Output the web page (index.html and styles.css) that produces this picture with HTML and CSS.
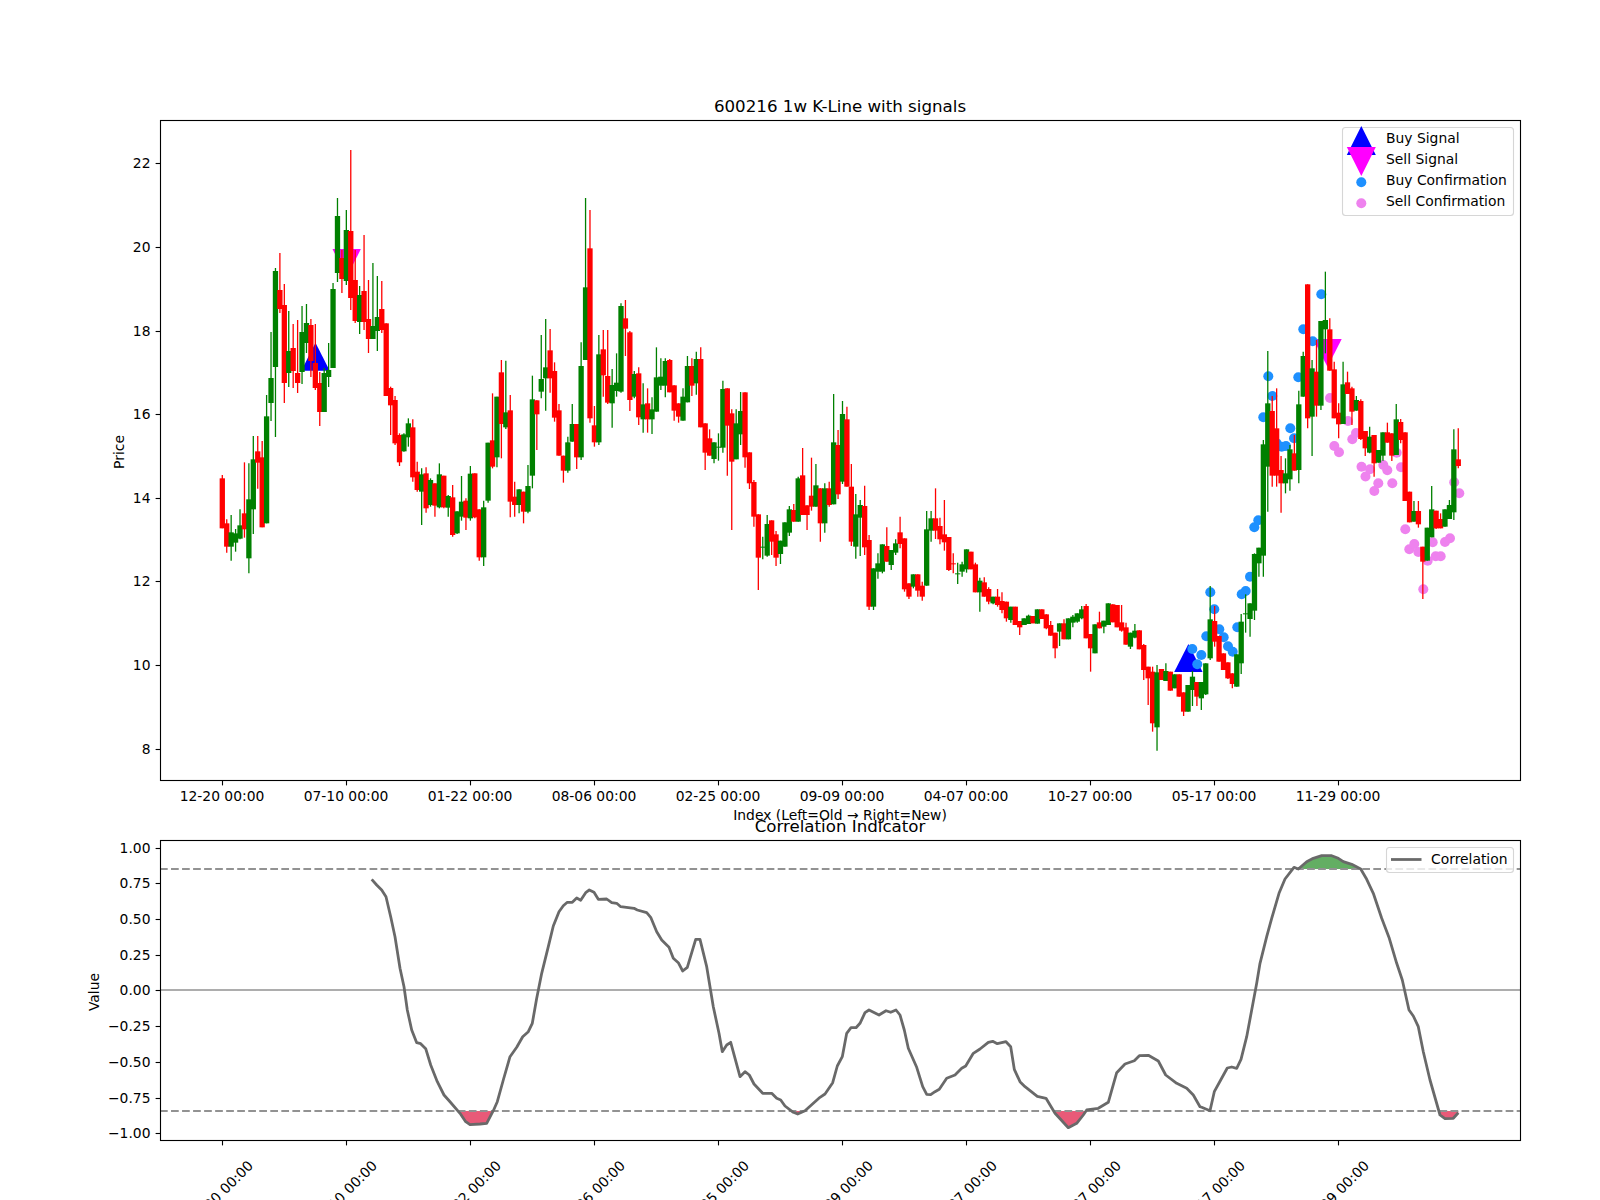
FILE: index.html
```html
<!DOCTYPE html>
<html lang="en">
<head>
<meta charset="utf-8">
<title>600216 1w K-Line with signals</title>
<link rel="stylesheet" href="styles.css">
</head>
<body>
<main class="figure">
<svg class="canvas" id="chart" xmlns="http://www.w3.org/2000/svg" width="1600" height="1200" viewBox="0 0 1600 1200">
  <defs>
    <clipPath id="below-low"><rect x="160" y="1111" width="1360" height="40"/></clipPath>
    <clipPath id="above-high"><rect x="160" y="840" width="1360" height="29"/></clipPath>
  </defs>

  <text class="title" x="840" y="112">600216 1w K-Line with signals</text>
  <g id="price-marks"></g>
  <g id="candles"></g>
  <rect class="frame" x="160.5" y="120.5" width="1360" height="660"/>
  <g id="price-ticks"></g>
  <text class="axis-label middle" x="840" y="820">Index (Left=Old → Right=New)</text>
  <text class="axis-label middle" transform="translate(124 452) rotate(-90)">Price</text>

  <g class="legend">
    <rect class="legend-box" x="1342.5" y="127.5" width="171" height="88" rx="3"/>
    <polygon class="buy" points="1361.3,126 1375.8,155 1346.8,155"/>
    <polygon class="sell" points="1346.8,147 1375.8,147 1361.3,176"/>
    <circle class="buy-dot" cx="1361.3" cy="182.3" r="5"/>
    <circle class="sell-dot" cx="1361.3" cy="203.3" r="5"/>
    <text class="axis-label" x="1386" y="143">Buy Signal</text>
    <text class="axis-label" x="1386" y="164">Sell Signal</text>
    <text class="axis-label" x="1386" y="185">Buy Confirmation</text>
    <text class="axis-label" x="1386" y="206">Sell Confirmation</text>
  </g>

  <text class="title" x="840" y="832">Correlation Indicator</text>
  <line class="zero-line" x1="160" y1="990" x2="1520" y2="990"/>
  <path class="fill-low" id="fill-low" clip-path="url(#below-low)"/>
  <path class="fill-high" id="fill-high" clip-path="url(#above-high)"/>
  <line class="level-line" x1="160" y1="869" x2="1520" y2="869"/>
  <line class="level-line" x1="160" y1="1111" x2="1520" y2="1111"/>
  <path class="corr-line" id="corr-line"/>
  <rect class="frame" x="160.5" y="840.5" width="1360" height="300"/>
  <g id="corr-ticks"></g>
  <text class="axis-label middle" transform="translate(99 992) rotate(-90)">Value</text>
  <g class="legend">
    <rect class="legend-box" x="1386.5" y="847.5" width="127" height="25" rx="3"/>
    <line class="corr-key" x1="1391" y1="859.5" x2="1421.5" y2="859.5"/>
    <text class="axis-label" x="1431" y="863.5">Correlation</text>
  </g>
</svg>
</main>
<script src="chart.js"></script>
</body>
</html>
```

FILE: styles.css
```css
html, body {
  margin: 0;
  padding: 0;
  background: #fff;
}

.figure {
  width: 1600px;
  height: 1200px;
  overflow: hidden;
}

.canvas {
  display: block;
  font-family: "DejaVu Sans", sans-serif;
}

.title {
  font-size: 16.67px;
  text-anchor: middle;
  fill: #000;
}

.axis-label,
.tick-label {
  font-size: 13.89px;
  fill: #000;
}

.middle { text-anchor: middle; }
.tick-label.center { text-anchor: middle; }
.tick-label.right { text-anchor: end; }

.frame {
  fill: none;
  stroke: #000;
  stroke-width: 1.11;
}

.tick {
  stroke: #000;
  stroke-width: 1.11;
}

.legend-box {
  fill: rgba(255, 255, 255, 0.8);
  stroke: #d6d6d6;
  stroke-width: 1.11;
}

.buy { fill: #0000ff; }
.sell { fill: #ff00ff; }
.buy-dot { fill: #1e90ff; }
.sell-dot { fill: #ee82ee; }

.wick-r { stroke: #ff0000; stroke-width: 1.3; }
.wick-g { stroke: #008000; stroke-width: 1.3; }
.body-r { fill: #ff0000; }
.body-g { fill: #008000; }

.zero-line {
  stroke: #adadad;
  stroke-width: 2;
}

.level-line {
  stroke: #929292;
  stroke-width: 2;
  stroke-dasharray: 7.7 3.33;
}

.corr-line,
.corr-key {
  fill: none;
  stroke: #696969;
  stroke-width: 2.78;
  stroke-linejoin: round;
}

.fill-low { fill: #e85a78; }
.fill-high { fill: #63ae63; }
```

FILE: chart.js
```js
(function () {
  var NS = 'http://www.w3.org/2000/svg';

  function el(parent, name, attrs, text) {
    var node = document.createElementNS(NS, name);
    for (var key in attrs) node.setAttribute(key, attrs[key]);
    if (text !== undefined) node.textContent = text;
    parent.appendChild(node);
    return node;
  }

  /* Each block: vertical origin, scale, then candles as
     colour, body top, body bottom, high, low. */
  var blocks = [
    [380, 3, 'r295,445,285,445 r430,500,418,518 g457,500,405,542 g460,488,447,515 g436,476,388,478 r400,448,247,473 g358,535,250,580 g238,388,168,462 r214,248,168,326 r232,442,183,442 g109,430,45,430'],
    [0, 1, 'g378,403,332,421 g271,367,268,437 r290,309,253,313 r305,383,284,403 g351,373,311,387 r348,371,324,388 r373,383,320,393 g332,372,306,384 g323,343,304,353 r325,361,319,377 r363,388,324,390 r383,412,372,426 g373,412,368,412 g370,377,343,387 g289,368,283,368 g216,273,198,282 r258,279,250,293 g230,281,210,285 r231,298,150,310 r280,321,250,323 g295,322,286,334 r291,322,235,330 r319,339,280,353 g326,339,263,339 g317,331,276,351 r309,330,281,333'],
    [230, 3, 'r280,498,280,498 r474,526,470,615 r510,640,498,645 r615,697,610,708 g613,664,610,665 g580,622,565,650 r592,742,568,755 r725,780,695,785 g733,785,715,885 r730,835,712,848 g750,825,745,830 r760,827,760,860 g733,832,700,835 r737,832,737,835 g798,833,795,860'],
    [380, 3, 'r352,465,315,470 g394,460,394,462 g365,410,288,422 r362,413,355,450 g281,415,258,422 r280,412,280,415 r388,532,388,542 g382,532,362,558 g188,362,188,368 r181,260,40,265'],
    [230, 3, 'g500,682,500,712 r427,582,390,685 g547,592,392,597 r541,815,495,862 r800,825,755,860 g778,825,778,850 r785,845,785,880 g768,845,705,850 g508,737,437,775 r511,553,511,660 g447,485,315,505 g412,445,267,542 r361,445,297,488 r423,563,397,575 r541,677,522,677 r677,722,677,758 g637,722,620,728 g582,635,522,635 r582,682,582,717 g408,682,337,690 g172,390,-96,390 r55,565,-60,578 r586,637,528,650 g373,637,315,645 r358,436,300,500 r438,518,300,522 g465,520,417,593 g458,483,370,500 g228,485,220,488 r265,296,210,378 r307,510,303,543 g432,500,423,505 r430,562,412,585'],
    [290, 3, 'g343,388,280,428 r340,388,295,428 g358,388,322,432 g262,365,172,365 g260,287,205,300 g213,287,205,322 r210,307,207,307 r286,362,286,392 r340,380,340,398 g320,392,295,392 g228,337,198,337 r228,287,205,318 g207,280,185,314 r207,412,172,412 r400,488,400,540 r445,497,418,497 g457,507,457,520 g470,473,430,512 g297,473,272,488 r295,407,295,557 r370,515,358,720 g400,508,358,508 g363,433,306,465 r307,502,307,533 r487,580,487,597 r576,680,570,710 r673,803,673,900 g770,773,740,808 g702,797,675,800 r691,755,691,795 r733,803,723,828 g752,792,752,822 g697,770,697,770 g658,728,648,738 r660,695,642,695 g565,695,560,695 r556,675,474,675 r646,675,646,720 r617,650,503,662 g586,650,522,650 r595,700,595,755 g595,700,580,728 r595,645,575,650 g457,643,312,643 r465,613,420,627 g372,575,333,582 r388,590,350,590 r590,755,522,768 g673,770,612,806 g645,683,630,798 r648,772,587,795 r750,950,735,960 g835,950,835,960 g820,845,790,866 g763,845,763,850 r768,815,712,815 g780,825,780,840 g760,788,748,795 r727,762,680,775 r745,898,745,905 r880,920,880,927 g853,890,853,895 r853,902,853,920'],
    [470, 3, 'r347,380,335,392 g178,347,123,347 g145,182,123,215 r145,182,55,207 r168,208,143,223 r193,217,90,242 r201,300,201,303 r280,283,250,310 g310,313,278,342 g283,305,275,320 g238,298,238,308 r245,298,245,298 r283,367,278,367 g332,367,323,425 r337,380,322,380 r357,395,352,403 g380,400,380,403 r380,405,357,410 r393,420,367,430 r395,445,395,455 g410,450,410,458 r410,465,410,465 r453,472,453,495 g445,465,445,465 g437,462,434,462 r438,460,438,460 g418,461,418,461 r418,447,418,447 r433,475,433,478 r465,497,453,497 r488,535,488,565 g460,485,460,528 r460,508,448,508 g445,508,445,508 g440,458,435,472 g430,455,430,458 g418,445,408,448 r408,505,402,505 r492,535,492,605 g463,550,463,550 r457,475,425,475 g452,470,452,490 g400,465,400,465 r403,457,403,457 r405,472,405,472 r457,482,405,485 r472,524,458,524 g488,530,488,537 g482,503,462,505 r481,538,481,538 r525,600,522,630 r590,625,590,705 r605,760,590,785 g607,772,585,842 r597,630,597,630 g603,633,580,633 r605,662,605,662 g613,655,613,655 r613,680,613,680 r667,725,667,738 g645,725,645,725 g620,660,603,708 r636,680,636,708'],
    [380, 3, 'g906,955,906,990 g850,943,850,945 g718,835,618,840 r723,785,678,800 r768,845,768,845 r820,870,820,870 r847,895,847,897 r880,912,880,925 g823,920,823,920 g725,850,702,882 g700,703,643,758 g670,717,670,770 g522,692,520,720 g503,550,503,590 g193,527,180,590 g70,260,-87,395 r93,287,48,320 r145,287,25,320 r270,310,228,398 g280,310,235,340 g208,298,195,332 r220,272,165,272'],
    [270, 3, 'g403,600,362,640 g258,380,245,380 r43,445,43,475 g295,440,270,558 r305,407,210,440 g153,407,153,420 g150,178,5,250 r178,302,145,302 r298,445,275,445 r428,463,400,505 g343,462,275,462 r337,372,305,372 r355,425,350,465 g390,422,378,422 r393,507,388,510 r483,535,483,558 g500,548,470,550 r495,580,495,620 g540,578,540,578 g487,557,487,572 r487,518,458,518 r490,557,490,573 g448,555,402,555 r456,510,447,520'],
    [380, 3, 'r157,363,157,363 r335,427,335,427 g393,425,363,425 r393,433,363,443 r500,545,500,657 g443,542,443,542 g388,472,318,472 r392,445,392,447 r417,445,400,445 g388,440,388,440 g375,417,360,417 g208,397,148,420 r238,258,145,265']
  ];

  var candleLayer = document.getElementById('candles');
  var index = 0;
  blocks.forEach(function (block) {
    block[2].split(' ').forEach(function (row) {
      var kind = row.charAt(0);
      var v = row.slice(1).split(',').map(function (n) { return block[0] + Number(n) / block[1]; });
      var x = 222.3 + 4.43 * index;
      el(candleLayer, 'line', { 'class': 'wick-' + kind, x1: x, x2: x, y1: v[2], y2: v[3] });
      el(candleLayer, 'rect', { 'class': 'body-' + kind, x: x - 2.65, y: v[0], width: 5.3, height: Math.max(v[1] - v[0], 1) });
      index += 1;
    });
  });

  var marks = document.getElementById('price-marks');
  [[315.5, 342.7, 1], [1188.4, 644, 1], [346.7, 277, -1], [1327.5, 367, -1]].forEach(function (m) {
    var tip = m[0] + ',' + m[1];
    var base = m[1] + 28 * m[2];
    el(marks, 'polygon', {
      'class': m[2] > 0 ? 'buy' : 'sell',
      points: tip + ' ' + (m[0] + 14.2) + ',' + base + ' ' + (m[0] - 14.2) + ',' + base
    });
  });

  var blue = [[1210.3,592.3],[1214.3,609.3],[1219.3,629.3],[1206.3,636.3],[1223.7,637.3],[1192.3,649],[1201.3,655],[1197.3,664.3],[1228,646.3],[1232.7,651.7],[1237.3,627.3],[1241.7,594.3],[1245.7,591],[1250,576.7],[1254.3,527.3],[1258.3,520.3],[1263.3,417.3],[1268.3,376.3],[1272.3,396],[1276.7,443.3],[1281.7,446.7],[1286,446],[1290.3,428.3],[1294,438.3],[1298.3,377.3],[1303.3,329.3],[1312.7,341.3],[1321.3,294.3]];
  var violet = [[1330,398],[1334.3,446],[1339,452.3],[1348,421],[1352.3,439.3],[1356,433],[1361.5,466.7],[1365.5,476.5],[1370,469.3],[1374.3,491],[1378.3,483.3],[1383.3,465],[1387.3,470.3],[1392.3,483.3],[1396.7,452.7],[1401,467.3],[1405.3,529.3],[1409.3,549.3],[1414.3,544],[1418.3,552],[1423.3,589.3],[1427.7,560.7],[1432.7,542.3],[1435.7,556.3],[1440.7,556.3],[1445,542],[1450,538.3],[1454.2,482.3],[1459.3,493.3]];
  blue.forEach(function (p) { el(marks, 'circle', { 'class': 'buy-dot', cx: p[0], cy: p[1], r: 5 }); });
  violet.forEach(function (p) { el(marks, 'circle', { 'class': 'sell-dot', cx: p[0], cy: p[1], r: 5 }); });

  /* Shared x ticks */
  var dates = ['12-20', '07-10', '01-22', '08-06', '02-25', '09-09', '04-07', '10-27', '05-17', '11-29'];
  var priceTicks = document.getElementById('price-ticks');
  var corrTicks = document.getElementById('corr-ticks');
  dates.forEach(function (d, i) {
    var x = Math.round(222 + 124.03 * i) + 0.5;
    var label = d + ' 00:00';
    el(priceTicks, 'line', { 'class': 'tick', x1: x, x2: x, y1: 781, y2: 785.4 });
    el(priceTicks, 'text', { 'class': 'tick-label center', x: x - 0.5, y: 801 }, label);
    el(corrTicks, 'line', { 'class': 'tick', x1: x, x2: x, y1: 1141, y2: 1145.4 });
    el(corrTicks, 'text', { 'class': 'tick-label center', transform: 'translate(' + (x - 2) + ' 1193) rotate(-45)', y: 5 }, label);
  });

  for (var p = 8; p <= 22; p += 2) {
    var py = Math.round(163.3 + (22 - p) * 41.8) + 0.5;
    el(priceTicks, 'line', { 'class': 'tick', x1: 155.6, x2: 160, y1: py, y2: py });
    el(priceTicks, 'text', { 'class': 'tick-label right', x: 150.5, y: py + 4 }, String(p));
  }

  for (var k = -4; k <= 4; k += 1) {
    var cy = Math.round(990.4 - k * 35.7) + 0.5;
    var value = (Math.abs(k) * 0.25).toFixed(2);
    el(corrTicks, 'line', { 'class': 'tick', x1: 155.6, x2: 160, y1: cy, y2: cy });
    el(corrTicks, 'text', { 'class': 'tick-label right', x: 150.5, y: cy + 4 }, (k < 0 ? '\u2212' : '') + value);
  }

  /* Correlation curve, traced in segments with their own origin. */
  var segments = [
    [0, 760, '1115,358 1130,375 1145,390 1158,410 1172,470 1185,530 1200,625 1212,680 1222,750 1235,810 1250,848 1262,851 1277,866 1292,915 1312,965 1332,1005 1350,1025 1380,1060 1397,1085 1410,1094 1440,1092'],
    [480, 860, '20,790 40,752 52,725 70,660 90,590 110,562 128,530 145,515 157,490 170,415 185,340 205,260 220,198 237,155 250,137 262,127 277,127 290,114 302,121 318,97 328,90 342,97 355,118 380,117 395,128 410,130 422,140 462,145 472,150 500,158 512,172 530,215 545,240 567,262 580,295 595,308 608,333 622,322 647,238 660,238 680,320 700,440 717,520 727,575 740,555 752,547 780,650 795,635 808,645 822,672 848,700 875,700 890,715 902,720 915,738 940,757 953,762 975,752 1020,712 1035,702 1058,668 1072,618 1087,590 1100,520 1113,503 1128,503 1140,490 1155,458 1167,450 1197,465'],
    [800, 980, '258,92 272,97 288,90 300,105 313,150 325,205 350,262 368,320 380,343 392,344 405,335 418,328 440,295 465,285 485,265 497,258 520,220 540,207 565,187 578,184 592,191 618,185 632,200 643,268 660,305 675,320 712,349 738,355 765,400 805,443 830,430 850,405 860,390 895,385 925,367 950,278 975,252 1003,242 1018,227 1045,226 1075,243 1097,285 1130,310 1160,325 1180,345'],
    [1150, 830, '150,830 155,832 180,842 193,785 212,750 232,714 245,711 260,715 273,688 290,620 305,540 320,460 330,400 350,320 365,265 387,190 405,147 432,112 445,117 470,95 490,85 515,77 545,77 565,85 580,95 605,103 632,117 650,148 670,190 695,265 718,325 740,400 757,450 777,540 790,558 805,590 820,665 840,750 870,855 885,866 910,865 925,848']
  ];
  var pts = [];
  segments.forEach(function (s) {
    s[2].split(' ').forEach(function (pair) {
      var xy = pair.split(',');
      pts.push((s[0] + xy[0] / 3).toFixed(1) + ' ' + (s[1] + xy[1] / 3).toFixed(1));
    });
  });
  var curve = 'M' + pts.join(' L');
  var first = pts[0].split(' ')[0];
  var last = pts[pts.length - 1].split(' ')[0];
  document.getElementById('corr-line').setAttribute('d', curve);
  document.getElementById('fill-low').setAttribute('d', curve + ' L' + last + ' 1111 L' + first + ' 1111 Z');
  document.getElementById('fill-high').setAttribute('d', curve + ' L' + last + ' 869 L' + first + ' 869 Z');
})();
```
